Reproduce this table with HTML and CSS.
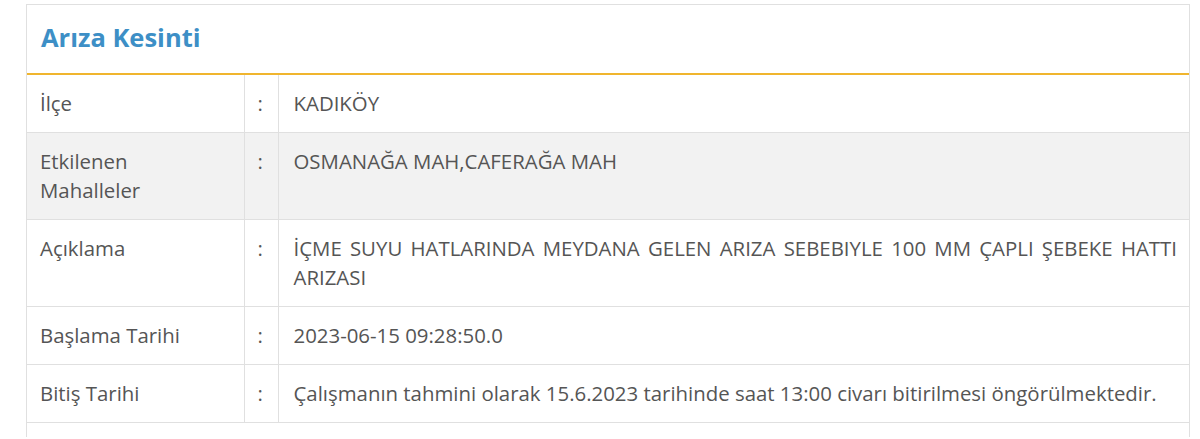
FILE: index.html
```html
<!DOCTYPE html>
<html lang="tr">
<head>
  <meta charset="UTF-8">
  <title>Arıza Kesinti</title>
  <link rel="stylesheet" href="styles.css">
</head>
<body>
  <div class="panel">
    <div class="panel-heading">
      <h2>Arıza Kesinti</h2>
    </div>
    <table class="info">
      <tr>
        <td class="label">İlçe</td>
        <td class="sep">:</td>
        <td class="value">KADIKÖY</td>
      </tr>
      <tr class="alt">
        <td class="label">Etkilenen Mahalleler</td>
        <td class="sep">:</td>
        <td class="value">OSMANAĞA MAH,CAFERAĞA MAH</td>
      </tr>
      <tr>
        <td class="label">Açıklama</td>
        <td class="sep">:</td>
        <td class="value">İÇME SUYU HATLARINDA MEYDANA GELEN ARIZA SEBEBIYLE 100 MM ÇAPLI ŞEBEKE HATTI ARIZASI</td>
      </tr>
      <tr>
        <td class="label">Başlama Tarihi</td>
        <td class="sep">:</td>
        <td class="value">2023-06-15 09:28:50.0</td>
      </tr>
      <tr>
        <td class="label">Bitiş Tarihi</td>
        <td class="sep">:</td>
        <td class="value">Çalışmanın tahmini olarak 15.6.2023 tarihinde saat 13:00 civarı bitirilmesi öngörülmektedir.</td>
      </tr>
      <tr>
        <td class="empty" colspan="3"></td>
      </tr>
    </table>
  </div>
</body>
</html>
```

FILE: styles.css
```css
* {
  margin: 0;
  padding: 0;
  box-sizing: border-box;
}

body {
  background: #ffffff;
  font-family: 'Open Sans', sans-serif;
  color: #555555;
  padding: 4px 10px 0 26px;
  height: 100vh;
  overflow: hidden;
}

.panel {
  border: 1px solid #e0e0e0;
  border-bottom: none;
  background: #fff;
}

.panel-heading {
  height: 70px;
  border-bottom: 2px solid #f0b52e;
  display: flex;
  align-items: center;
  padding-left: 14px;
}

.panel-heading h2 {
  font-size: 25.5px;
  font-weight: 700;
  color: #3d8fc6;
  padding-bottom: 4px;
}

.info {
  width: 100%;
  border-collapse: collapse;
}

.info td {
  border-bottom: 1px solid #e0e0e0;
  padding: 14px 12px 14px 13px;
  font-size: 20.4px;
  line-height: 29px;
  vertical-align: top;
}

.info tr.alt td {
  background: #f2f2f2;
}

.info .label {
  width: 217px;
  border-right: 1px solid #e0e0e0;
}

.info .sep {
  width: 34px;
  border-right: 1px solid #e0e0e0;
  padding-left: 13px;
  padding-right: 0;
}

.info .value {
  padding-left: 15px;
  text-align: justify;
}

.info .empty {
  height: 14px;
  padding: 0;
  border-bottom: none;
}
```
